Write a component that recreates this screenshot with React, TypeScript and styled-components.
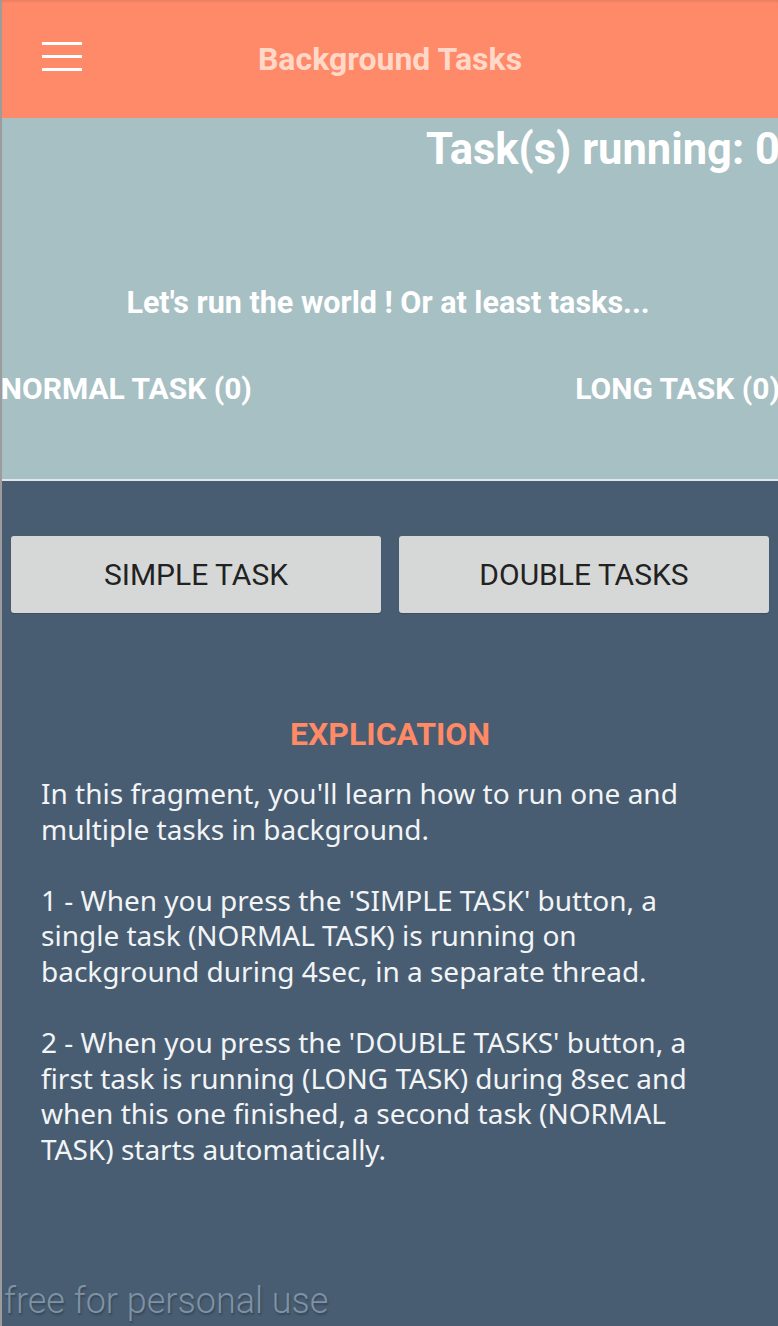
import styled, { createGlobalStyle } from 'styled-components';

const GlobalStyle = createGlobalStyle`
	html, body {
		margin: 0;
		padding: 0;
		background: #485d72;
	}
	body {
		font-family: Roboto, "Noto Sans", Arial, sans-serif;
	}
`;

const Screen = styled.div`
	width: 778px;
	height: 1326px;
	display: flex;
	flex-direction: column;
	border-left: 2px solid #9c9c9c;
	box-sizing: border-box;
	overflow: hidden;
	position: relative;
`;

const Toolbar = styled.header`
	height: 118px;
	flex-shrink: 0;
	background: #ff8a6a;
	box-shadow: inset 0 3px 2px -1px rgba(0, 0, 0, 0.08);
	display: flex;
	align-items: center;
	position: relative;
`;

const MenuButton = styled.div`
	position: absolute;
	left: 40px;
	top: 42px;
	width: 40px;
	display: flex;
	flex-direction: column;
	gap: 10px;
`;

const MenuLine = styled.span`
	display: block;
	height: 3px;
	background: #fff;
`;

const Title = styled.h1`
	margin: 0;
	width: 100%;
	text-align: center;
	font-size: 32px;
	font-weight: 700;
	color: #ffd8c8;
`;

const StatusPanel = styled.section`
	height: 361px;
	flex-shrink: 0;
	background: #a7c0c4;
	color: #fff;
	font-weight: 700;
	display: flex;
	flex-direction: column;
	border-bottom: 2px solid #dfe7e9;
`;

const Running = styled.div`
	text-align: right;
	font-size: 43.5px;
	margin-top: 9px;
	line-height: 46px;
	margin-right: -2px;
	white-space: nowrap;
`;

const Motto = styled.div`
	text-align: center;
	font-size: 30.5px;
	margin-top: 112px;
	line-height: 36px;
	padding-right: 4px;
`;

const Counters = styled.div`
	display: flex;
	justify-content: space-between;
	font-size: 30px;
	margin-top: 50px;
	line-height: 36px;
	margin-left: -6px;
	margin-right: -2px;
	white-space: nowrap;
`;

const Content = styled.main`
	flex: 1;
	background: #485d72;
	padding: 55px 9px 0 9px;
	display: flex;
	flex-direction: column;
`;

const Buttons = styled.div`
	display: grid;
	grid-template-columns: 1fr 1fr;
	gap: 18px;
`;

const ActionButton = styled.button`
	height: 77px;
	background: #d6d8d8;
	border: none;
	border-radius: 3px;
	font-family: Roboto, Arial, sans-serif;
	font-size: 30px;
	color: #222;
	box-shadow: 0 1px 1px rgba(0, 0, 0, 0.15);
`;

const Heading = styled.h2`
	margin: 103px 0 0 0;
	text-align: center;
	color: #ff8a65;
	font-size: 32px;
	font-weight: 700;
	line-height: 36px;
`;

const Explanation = styled.div`
	margin-top: 24px;
	padding-left: 30px;
	color: #f2f4f6;
	font-family: "Noto Sans", "Open Sans", Arial, sans-serif;
	font-size: 28px;
	line-height: 35.6px;
	white-space: nowrap;
`;

const Paragraph = styled.p`
	margin: 0 0 35.6px 0;
`;

const Watermark = styled.div`
	position: absolute;
	left: 2px;
	bottom: 4px;
	font-family: Roboto, Arial, sans-serif;
	font-weight: 300;
	font-size: 36px;
	color: #7f92a3;
	text-shadow: 1px 2px 2px rgba(0, 0, 0, 0.25);
`;

export default function App() {
	return (
		<>
			<GlobalStyle />
			<Screen>
				<Toolbar>
					<MenuButton>
						<MenuLine />
						<MenuLine />
						<MenuLine />
					</MenuButton>
					<Title>Background Tasks</Title>
				</Toolbar>
				<StatusPanel>
					<Running>Task(s) running: 0</Running>
					<Motto>Let's run the world ! Or at least tasks...</Motto>
					<Counters>
						<span>'NORMAL TASK (0)</span>
						<span>LONG TASK (0)</span>
					</Counters>
				</StatusPanel>
				<Content>
					<Buttons>
						<ActionButton>SIMPLE TASK</ActionButton>
						<ActionButton>DOUBLE TASKS</ActionButton>
					</Buttons>
					<Heading>EXPLICATION</Heading>
					<Explanation>
						<Paragraph>
							In this fragment, you'll learn how to run one and<br />
							multiple tasks in background.
						</Paragraph>
						<Paragraph>
							1 - When you press the 'SIMPLE TASK' button, a<br />
							single task (NORMAL TASK) is running on<br />
							background during 4sec, in a separate thread.
						</Paragraph>
						<Paragraph>
							2 - When you press the 'DOUBLE TASKS' button, a<br />
							first task is running (LONG TASK) during 8sec and<br />
							when this one finished, a second task (NORMAL<br />
							TASK) starts automatically.
						</Paragraph>
					</Explanation>
				</Content>
				<Watermark>free for personal use</Watermark>
			</Screen>
		</>
	);
}
